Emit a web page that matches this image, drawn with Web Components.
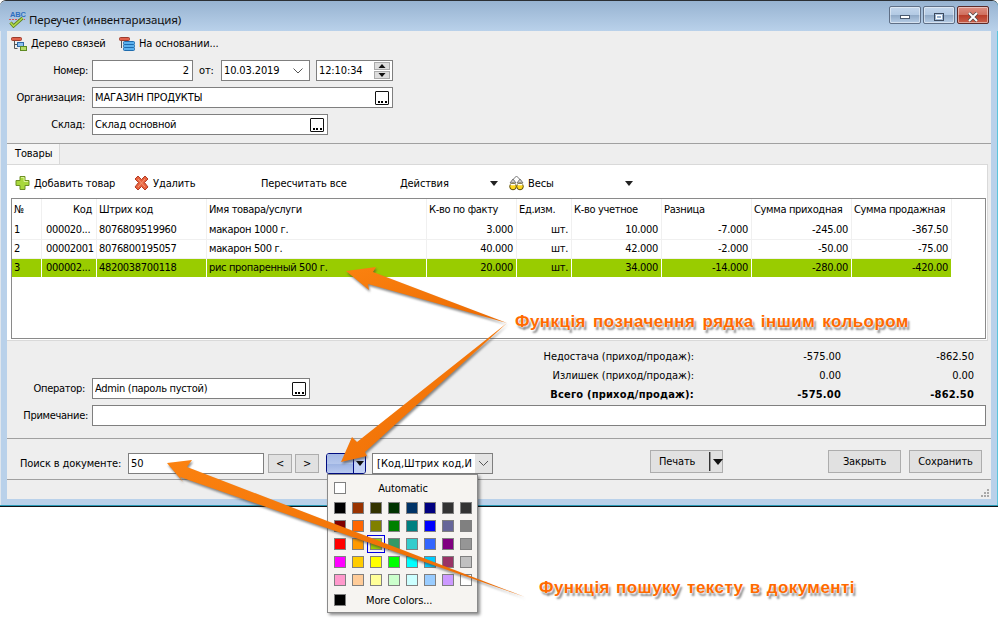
<!DOCTYPE html>
<html>
<head>
<meta charset="utf-8">
<title>Переучет</title>
<style>
  html, body { margin: 0; background: #fff; }
  body { font: 11px "DejaVu Sans Condensed", "DejaVu Sans", sans-serif; letter-spacing: -.12px; color: #000; overflow: hidden; }
</style>
</head>
<body>
<app-page></app-page>
<script>
// Helper: registers an element with an open shadow root built from css + html
function define(name, css, html, onConnect) {
    const template = document.createElement('template');
    template.innerHTML = `<style>${css}</style>${html}`;
    customElements.define(name, class extends HTMLElement {
        constructor() {
            super();
            this.attachShadow({ mode: 'open' });
            this.shadowRoot.appendChild(template.content.cloneNode(true));
        }
        connectedCallback() {
            if (onConnect) onConnect(this);
        }
    });
}

// Window buttons
define('frame-button', `
    :host { display: block; width: 32px; height: 18px; box-sizing: border-box; border: 1px solid #5f6f86; border-radius: 2px;
            background: linear-gradient(#c3d6ec 0, #b3cae4 48%, #8fa9c6 50%, #b6cde6 100%); box-shadow: inset 0 0 0 1px rgba(255,255,255,.45);
            display: flex; align-items: center; justify-content: center; }
    :host([kind=close]) { background: linear-gradient(#dd8f82 0, #d0705f 48%, #b83c28 50%, #c9604c 100%); border-color: #5c2a28; }
`, `<slot></slot>`);

define('window-frame', `
    :host { display: block; box-sizing: border-box; width: 998px; height: 507px; background: #b9d1ea; border-top: 1px solid #2b2f33;
            border-bottom: 1px solid #101418; border-radius: 6px 6px 0 0; box-shadow: inset 0 -1px 0 #2a9bb8, inset -1px 0 0 #5cc4dc, inset 1px 0 0 #dfe6ee; position: relative; }
    .title { height: 30px; display: flex; align-items: center; padding: 0 9px 0 9px; background: linear-gradient(#97b3d1, #b9d1ea); border-radius: 6px 6px 0 0; }
    .title span { font: 11.5px "Noto Sans", "Open Sans", sans-serif; letter-spacing: -.1px; margin-left: 3px; color: #111; padding-top: 6px; }
    .title svg { margin-top: 5px; }
    .btns { margin-left: auto; display: flex; gap: 2px; margin-top: -3px; }
    .client { margin: 0 7px; height: 468px; background: #eeeeee; }
`, `
    <div class="title">
        <svg width="17" height="18" viewBox="0 0 17 18">
            <text x="1" y="7" font-family="Liberation Sans" font-size="7.5" font-weight="bold" fill="#2f6fc0">ABC</text>
            <path d="M0 9.5h16" stroke="#d8534e" stroke-dasharray="2 1"/>
            <path d="M1.5 12.5l3 3.5 9-8" fill="none" stroke="#5a7f1e" stroke-width="3.2"/>
            <path d="M1.5 12.5l3 3.5 9-8" fill="none" stroke="#b2d94a" stroke-width="1.6"/>
        </svg>
        <span>Переучет (инвентаризация)</span>
        <div class="btns">
            <frame-button><svg width="10" height="5"><rect x=".5" y=".5" width="9" height="3" fill="#fff" stroke="#4a5a70"/></svg></frame-button>
            <frame-button><svg width="10" height="9"><rect x=".5" y=".5" width="9" height="7" fill="none" stroke="#3c4a5e"/><rect x="2.5" y="2.5" width="5" height="3" fill="none" stroke="#fff"/></svg></frame-button>
            <frame-button kind="close"><svg width="12" height="10" viewBox="0 0 12 10"><path d="M2 1l8 8M10 1l-8 8" stroke="#4a4a4a" stroke-width="3.4"/><path d="M2 1l8 8M10 1l-8 8" stroke="#fff" stroke-width="2"/></svg></frame-button>
        </div>
    </div>
    <div class="client"><slot></slot></div>
`);

// Icon + caption used in both toolbars
define('tool-item', `
    :host { display: inline-flex; align-items: center; height: 20px; white-space: nowrap; box-sizing: border-box; }
    ::slotted(svg) { flex: none; margin-right: 4px; }
`, `<slot name="icon"></slot><slot></slot>`);

define('drop-caret', `
    :host { display: inline-block; margin-left: auto; width: 0; height: 0; border: 4px solid transparent; border-top: 5px solid #222; border-bottom: 0; }
`, ``);

// Sunken single line field; right side content goes in the "end" slot
define('text-field', `
    :host { display: inline-flex; align-items: center; box-sizing: border-box; height: 21px; background: #fff; border: 1px solid #7f7f7f; padding: 0 2px; white-space: nowrap; overflow: hidden; }
    :host([align=right]) { justify-content: flex-end; padding-right: 2px; }
    .v { flex: 1; overflow: hidden; }
    :host([align=right]) .v { text-align: right; }
    ::slotted([slot=end]) { flex: none; }
`, `<div class="v"><slot></slot></div><slot name="end"></slot>`);

define('dots-button', `
    :host { display: block; width: 14px; height: 14px; box-sizing: border-box; border: 1px solid #111; border-radius: 1px; background: #fff; margin-right: 1px; position: relative; }
    i { position: absolute; bottom: 1px; width: 2px; height: 2px; background: #000; }
`, `<i style="left:2px"></i><i style="left:5px"></i><i style="left:9px"></i>`);

define('form-row', `
    :host { display: flex; align-items: center; height: 21px; }
    label { flex: none; width: 85px; box-sizing: border-box; text-align: right; padding-right: var(--gap, 7px); letter-spacing: -.3px; }
`, `<label></label><slot></slot>`, el => {
    el.shadowRoot.querySelector('label').textContent = el.getAttribute('label');
});

define('flat-button', `
    :host { display: flex; align-items: center; justify-content: center; box-sizing: border-box; height: 23px; background: #e1e1e1; border: 1px solid #adadad; flex: none; }
`, `<slot></slot>`);

// Goods table
const gridColumns = [30, 55, 110, 220, 90, 55, 90, 90, 100, 100];
const gridHead = ['№', 'Код', 'Штрих код', 'Имя товара/услуги', 'К-во по факту', 'Ед.изм.', 'К-во учетное', 'Разница', 'Сумма приходная', 'Сумма продажная'];
const gridRows = [
    ['1', '000020...', '8076809519960', 'макарон 1000 г.', '3.000', 'шт.', '10.000', '-7.000', '-245.00', '-367.50'],
    ['2', '00002001', '8076800195057', 'макарон 500 г.', '40.000', 'шт.', '42.000', '-2.000', '-50.00', '-75.00'],
    ['3', '000002...', '4820038700118', 'рис пропаренный 500 г.', '20.000', 'шт.', '34.000', '-14.000', '-280.00', '-420.00']
];
define('data-grid', `
    :host { display: block; box-sizing: border-box; height: 141px; border: 1px solid #8a8a8a; margin: 0 1px 1px 4px; background: #fff; letter-spacing: -.33px; }
    .g { display: grid; grid-template-columns: ${gridColumns.map(w => w + 'px').join(' ')}; grid-auto-rows: 19px; justify-content: start; }
    .c { box-sizing: border-box; padding: 0 3px 0 2px; border-right: 1px solid #f0f0f0; border-bottom: 1px solid #f0f0f0; line-height: 18px; white-space: nowrap; overflow: hidden; }
    .h { height: 22px; line-height: 21px; border-bottom: 0; margin-bottom: 0; border-right-color: #f0f0f0; }
    .r { text-align: right; }
    .p { padding-left: 4px; }
    .k { padding-right: 4px; }
    .sel { background: #99cc00; border-color: #fff; }
    .head { grid-auto-rows: 22px; }
`, `<div class="g head"></div><div class="g body"></div>`, el => {
    const head = el.shadowRoot.querySelector('.head');
    const body = el.shadowRoot.querySelector('.body');
    if (body.children.length) return;
    gridHead.forEach((text, i) => {
        const cell = document.createElement('div');
        cell.className = 'c h' + (i === 1 ? ' r k' : '');
        cell.textContent = text;
        head.appendChild(cell);
    });
    gridRows.forEach((row, r) => row.forEach((text, i) => {
        const cell = document.createElement('div');
        cell.className = 'c' + (i >= 4 ? ' r' : '') + (i === 1 ? ' p' : '') + (r === 2 ? ' sel' : '');
        cell.textContent = text;
        body.appendChild(cell);
    }));
});

// Color picker drop-down
const swatches = ['000000', '993300', '333300', '003300', '003366', '000080', '333333', '333333',
    '800000', 'ff6600', '808000', '008000', '008080', '0000ff', '666699', '808080',
    'ff0000', 'ff9900', '99cc00', '339966', '33cccc', '3366ff', '800080', '969696',
    'ff00ff', 'ffcc00', 'ffff00', '00ff00', '00ffff', '00ccff', '993366', 'c0c0c0',
    'ff99cc', 'ffcc99', 'ffff99', 'ccffcc', 'ccffff', '99ccff', 'cc99ff', 'ffffff'];
define('color-popup', `
    :host { position: absolute; left: 327px; top: 474px; width: 151px; height: 139px; box-sizing: border-box; background: #f6f4f1; border: 1px solid #8a8a8a;
            box-shadow: 2px 2px 3px rgba(0,0,0,.45); padding: 6px 6px 0 6px; z-index: 2; }
    .row { display: flex; align-items: center; height: 14px; }
    .row span { flex: 1; text-align: center; }
    .s { box-sizing: border-box; width: 12px; height: 12px; border: 1.5px solid #808080; }
    .grid { display: grid; grid-template-columns: repeat(8, 12px); grid-auto-rows: 12px; gap: 6px; margin: 7px 0 0 0; }
    .on { outline: 1px solid #0000e0; outline-offset: 2px; }
    .more { margin-top: 7px; }
    .more span { text-align: left; padding-left: 20px; }
`, `
    <div class="row"><div class="s" style="background:#fff"></div><span style="padding-right:11px">Automatic</span></div>
    <div class="grid"></div>
    <div class="row more"><div class="s" style="background:#000"></div><span>More Colors...</span></div>
`, el => {
    const grid = el.shadowRoot.querySelector('.grid');
    if (grid.children.length) return;
    swatches.forEach((color, i) => {
        const s = document.createElement('div');
        s.className = 's' + (i === 18 ? ' on' : '');
        s.style.background = '#' + color;
        grid.appendChild(s);
    });
});

// Orange arrows and captions drawn over the screenshot
define('call-outs', `
    :host { position: absolute; left: 0; top: 0; width: 998px; height: 623px; z-index: 3; pointer-events: none; }
    svg { position: absolute; left: 0; top: 0; filter: drop-shadow(1px 2px 1px rgba(60,60,60,.6)); }
    p { position: absolute; margin: 0; font: bold 17px "Liberation Sans", Arial, sans-serif; color: #ff6a00; white-space: nowrap; letter-spacing: .44px;
        text-shadow: 0 0 2px #fff, 0 0 2px #fff, 2px 3px 2px #8a8a8a; }
`, `
    <svg width="998" height="623" viewBox="0 0 998 623">
        <defs>
            <linearGradient id="o1" x1="0" y1="0" x2="1" y2="1"><stop offset="0" stop-color="#fb8210"/><stop offset="1" stop-color="#ec6a02"/></linearGradient>
        </defs>
        <polygon fill="url(#o1)" points="346,271 376,267 373,272 507,323 368,284 369,290"/>
        <polygon fill="url(#o1)" points="341,462 352,437 357,442 507,323 365,452 367,456"/>
        <polygon fill="url(#o1)" points="167,463 192,460 187,467 525,597 180,477 183,482"/>
    </svg>
    <p style="left:515px;top:312px;word-spacing:2px">Функція позначення рядка іншим кольором</p>
    <p style="left:539px;top:578px;word-spacing:1px">Функція пошуку тексту в документі</p>
`);

// Whole window content
define('app-page', `
    :host { display: block; position: relative; width: 998px; height: 623px; overflow: hidden; }
    .head { box-sizing: border-box; height: 113px; border-bottom: 1px solid #a0a0a0; padding-left: 0; }
    .links { display: flex; height: 29px; box-sizing: border-box; padding: 0 0 4px 4px; align-items: center; }
    .links tool-item:first-child { width: 108px; }
    .rows { display: flex; flex-direction: column; gap: 6px; }
    .tabs { height: 20px; display: flex; }
    .tab { width: 53px; box-sizing: border-box; background: #f6f6f6; border-right: 1px solid #d9d9d9; padding-left: 8px; line-height: 20px; }
    .pane { box-sizing: border-box; width: 981px; height: 177px; background: #fff; border: 1px solid #d9d9d9; border-left: 0; }
    .bar { display: flex; align-items: center; height: 33px; box-sizing: border-box; padding: 3px 0 0 8px; }
    .bar tool-item:nth-child(1) { width: 119px; }
    .bar tool-item:nth-child(2) { width: 127px; }
    .bar tool-item:nth-child(3) { width: 139px; }
    .bar tool-item:nth-child(4) { width: 109px; padding-right: 11px; }
    .bar tool-item:nth-child(5) { width: 124px; }
    .info { box-sizing: border-box; height: 96px; margin-top: 2px; border-bottom: 1px solid #a0a0a0; }
    .top { display: grid; grid-template-columns: 1fr auto; grid-template-rows: 59px; margin-bottom: 3px; }
    .top form-row { align-self: end; margin-bottom: 3px; }
    .sum { display: grid; grid-template-columns: 300px 147px 133px; grid-auto-rows: 19px; margin: 4px 17px 0 0; line-height: 19px; text-align: right; letter-spacing: -.05px; }
    .sum b { font-weight: bold; letter-spacing: .2px; }
    .foot { box-sizing: border-box; height: 41px; border-bottom: 1px solid #a0a0a0; display: flex; align-items: flex-start; padding: 11px 9px 0 13px; }
    .foot .lbl { width: 108px; margin-top: 3px; line-height: 21px; height: 21px; flex: none; }
    .foot text-field { margin-top: 3px; }
    .nav { width: 24px; height: 19px; margin: 4px 0 0 3px; }
    .nav:first-of-type { margin-left: 4px; }
    .pick { display: flex; width: 40px; height: 21px; margin: 3px 0 0 7px; box-sizing: border-box; border: 1px solid #000c80; border-radius: 3px; overflow: hidden; flex: none; }
    .pick div:first-child { width: 26px; background: linear-gradient(#a4b8e4, #b4c6ec 50%, #9db3e2 52%, #b9caf0); border-right: 1px solid #000c80; }
    .pick div:last-child { flex: 1; background: #c3d2f6; display: flex; align-items: center; justify-content: center; }
    .combo { width: 121px; margin-left: 6px !important; padding: 0 0 0 4px; letter-spacing: .03px; }
    .combo-end { width: 17px; height: 19px; background: #e4e4e4; display: flex; align-items: center; justify-content: center; }
    .print { width: 73px; margin-left: 157px; justify-content: flex-start; padding-left: 8px; }
    .print span { width: 50px; flex: none; }
    .print i { display: block; width: 2px; height: 19px; background: linear-gradient(90deg, #333 50%, #999 50%); margin-right: 2px; flex: none; }
    .print u { display: block; width: 0; height: 0; border: 5px solid transparent; border-top: 6px solid #111; border-bottom: 0; }
    .close { width: 73px; margin-left: auto; }
    .save { width: 73px; margin-left: 8px; }
    .status { height: 19px; position: relative; }
    .grip { position: absolute; right: 1px; bottom: 1px; }
`, `
    <window-frame>
        <div class="head">
            <div class="links">
                <tool-item>
                    <svg slot="icon" width="16" height="16" viewBox="0 0 16 16">
                        <rect x=".5" y="1.5" width="10" height="3" rx="1" fill="#e0604a" stroke="#9c3c2c"/>
                        <path d="M3.5 5v7.5h3M3.5 8.5h3" fill="none" stroke="#555"/>
                        <rect x="6.5" y="6.5" width="6" height="4" fill="#8cc0ee" stroke="#2d6aa8"/>
                        <rect x="9.5" y="10.5" width="6" height="4" fill="#b6dc68" stroke="#5e8a22"/>
                    </svg>Дерево связей</tool-item>
                <tool-item>
                    <svg slot="icon" width="16" height="16" viewBox="0 0 16 16">
                        <rect x=".5" y="1.5" width="10" height="3" rx="1" fill="#e0604a" stroke="#9c3c2c"/>
                        <path d="M2.5 5v7" fill="none" stroke="#555"/>
                        <rect x="4.5" y="5.5" width="11" height="3" rx="1" fill="#5cb2ee" stroke="#1f6cae"/>
                        <rect x="4.5" y="8.5" width="11" height="3" rx="1" fill="#5cb2ee" stroke="#1f6cae"/>
                        <rect x="4.5" y="11.5" width="11" height="3" rx="1" fill="#5cb2ee" stroke="#1f6cae"/>
                    </svg>На основании...</tool-item>
            </div>
            <div class="rows">
                <form-row label="Номер:" style="--gap:4px">
                    <text-field align="right" style="width:101px;padding-right:3px">2</text-field>
                    <span style="margin:0 7px 0 6px;width:15px">от:</span>
                    <text-field style="width:89px">10.03.2019
                        <svg slot="end" width="12" height="8" style="margin-right:3px"><path d="M1.5 1.5l4.5 4.5 4.5-4.500" fill="none" stroke="#555"/></svg></text-field>
                    <text-field style="width:77px;margin-left:6px">12:10:34
                        <svg slot="end" width="16" height="17" style="margin-right:0">
                            <rect x=".5" y=".5" width="15" height="7" fill="#ddd" stroke="#aaa"/><rect x=".5" y="9.5" width="15" height="7" fill="#ddd" stroke="#aaa"/>
                            <path d="M8 2l3.5 4h-7zM4.500 11h7L8 15z" fill="#111"/></svg></text-field>
                </form-row>
                <form-row label="Организация:"><text-field style="width:301px">МАГАЗИН ПРОДУКТЫ<dots-button slot="end"></dots-button></text-field></form-row>
                <form-row label="Склад:"><text-field style="width:236px;letter-spacing:-.2px">Склад основной<dots-button slot="end"></dots-button></text-field></form-row>
            </div>
        </div>
        <div class="tabs"><div class="tab">Товары</div></div>
        <div class="pane">
            <div class="bar">
                <tool-item>
                    <svg slot="icon" width="15" height="16" viewBox="0 0 15 16">
                        <path d="M5 1.500h5v4h4v5h-4v4H5v-4H1v-5h4z" fill="#a8d83c" stroke="#6d8f24"/>
                        <path d="M6 2.500h3v4h4" fill="none" stroke="#dcf29a"/>
                    </svg>Добавить товар</tool-item>
                <tool-item>
                    <svg slot="icon" width="15" height="16" viewBox="0 0 15 16" style="margin-right:4px">
                        <path d="M1 4l3-3 3.500 3.500L11 1l3 3-3.500 3.500L14 12l-3 3-3.500-3.500L4 15l-3-3 3.500-4.500z" fill="#e8623e" stroke="#b23c24"/>
                        <path d="M4 4l7 8M11 4l-7 8" stroke="#f49a78" stroke-width="1"/>
                    </svg>Удалить</tool-item>
                <tool-item>Пересчитать все</tool-item>
                <tool-item>Действия<drop-caret></drop-caret></tool-item>
                <tool-item>
                    <svg slot="icon" width="15" height="16" viewBox="0 0 15 16">
                        <path d="M4 4.500l3.500-3.500L11 4.500" fill="none" stroke="#777"/>
                        <path d="M1 8l3-4 3 4zM8 8l3-4 3 4z" fill="#cfcfcf" stroke="#777"/>
                        <circle cx="4" cy="11.500" r="3.300" fill="#ffd820" stroke="#5a4c10"/><circle cx="11" cy="11.500" r="3.300" fill="#ffd820" stroke="#5a4c10"/>
                        <path d="M1.500 9.500h5M8.500 9.500h5" stroke="#fff" stroke-width="1.500"/>
                    </svg>Весы<drop-caret></drop-caret></tool-item>
            </div>
            <data-grid></data-grid>
        </div>
        <div class="info">
            <div class="top">
                <form-row label="Оператор:"><text-field style="width:218px;letter-spacing:-.3px">Admin (пароль пустой)<dots-button slot="end"></dots-button></text-field></form-row>
                <div class="sum">
                    <span>Недостача (приход/продаж):</span><span>-575.00</span><span>-862.50</span>
                    <span>Излишек (приход/продаж):</span><span>0.00</span><span>0.00</span>
                    <b>Всего (приход/продаж):</b><b>-575.00</b><b>-862.50</b>
                </div>
            </div>
            <form-row label="Примечание:" style="--gap:4px"><text-field style="width:894px"></text-field></form-row>
        </div>
        <div class="foot">
            <span class="lbl">Поиск в документе:</span>
            <text-field style="width:136px">50</text-field>
            <flat-button class="nav">&lt;</flat-button>
            <flat-button class="nav">&gt;</flat-button>
            <div class="pick"><div></div><div><svg width="8" height="5"><path d="M0 0h8L4 5z" fill="#111"/></svg></div></div>
            <text-field class="combo">[Код,Штрих код,И<div slot="end" class="combo-end"><svg width="11" height="7"><path d="M1 1l4.500 4.500L10 1" fill="none" stroke="#555"/></svg></div></text-field>
            <flat-button class="print"><span>Печать</span><i></i><u></u></flat-button>
            <flat-button class="close">Закрыть</flat-button>
            <flat-button class="save">Сохранить</flat-button>
        </div>
        <div class="status">
            <svg class="grip" width="9" height="9"><g fill="#a8a8a8"><rect x="6" y="0" width="2" height="2"/><rect x="3" y="3" width="2" height="2"/><rect x="6" y="3" width="2" height="2"/><rect x="0" y="6" width="2" height="2"/><rect x="3" y="6" width="2" height="2"/><rect x="6" y="6" width="2" height="2"/></g></svg>
        </div>
    </window-frame>
    <color-popup></color-popup>
    <call-outs></call-outs>
`);
</script>
</body>
</html>
